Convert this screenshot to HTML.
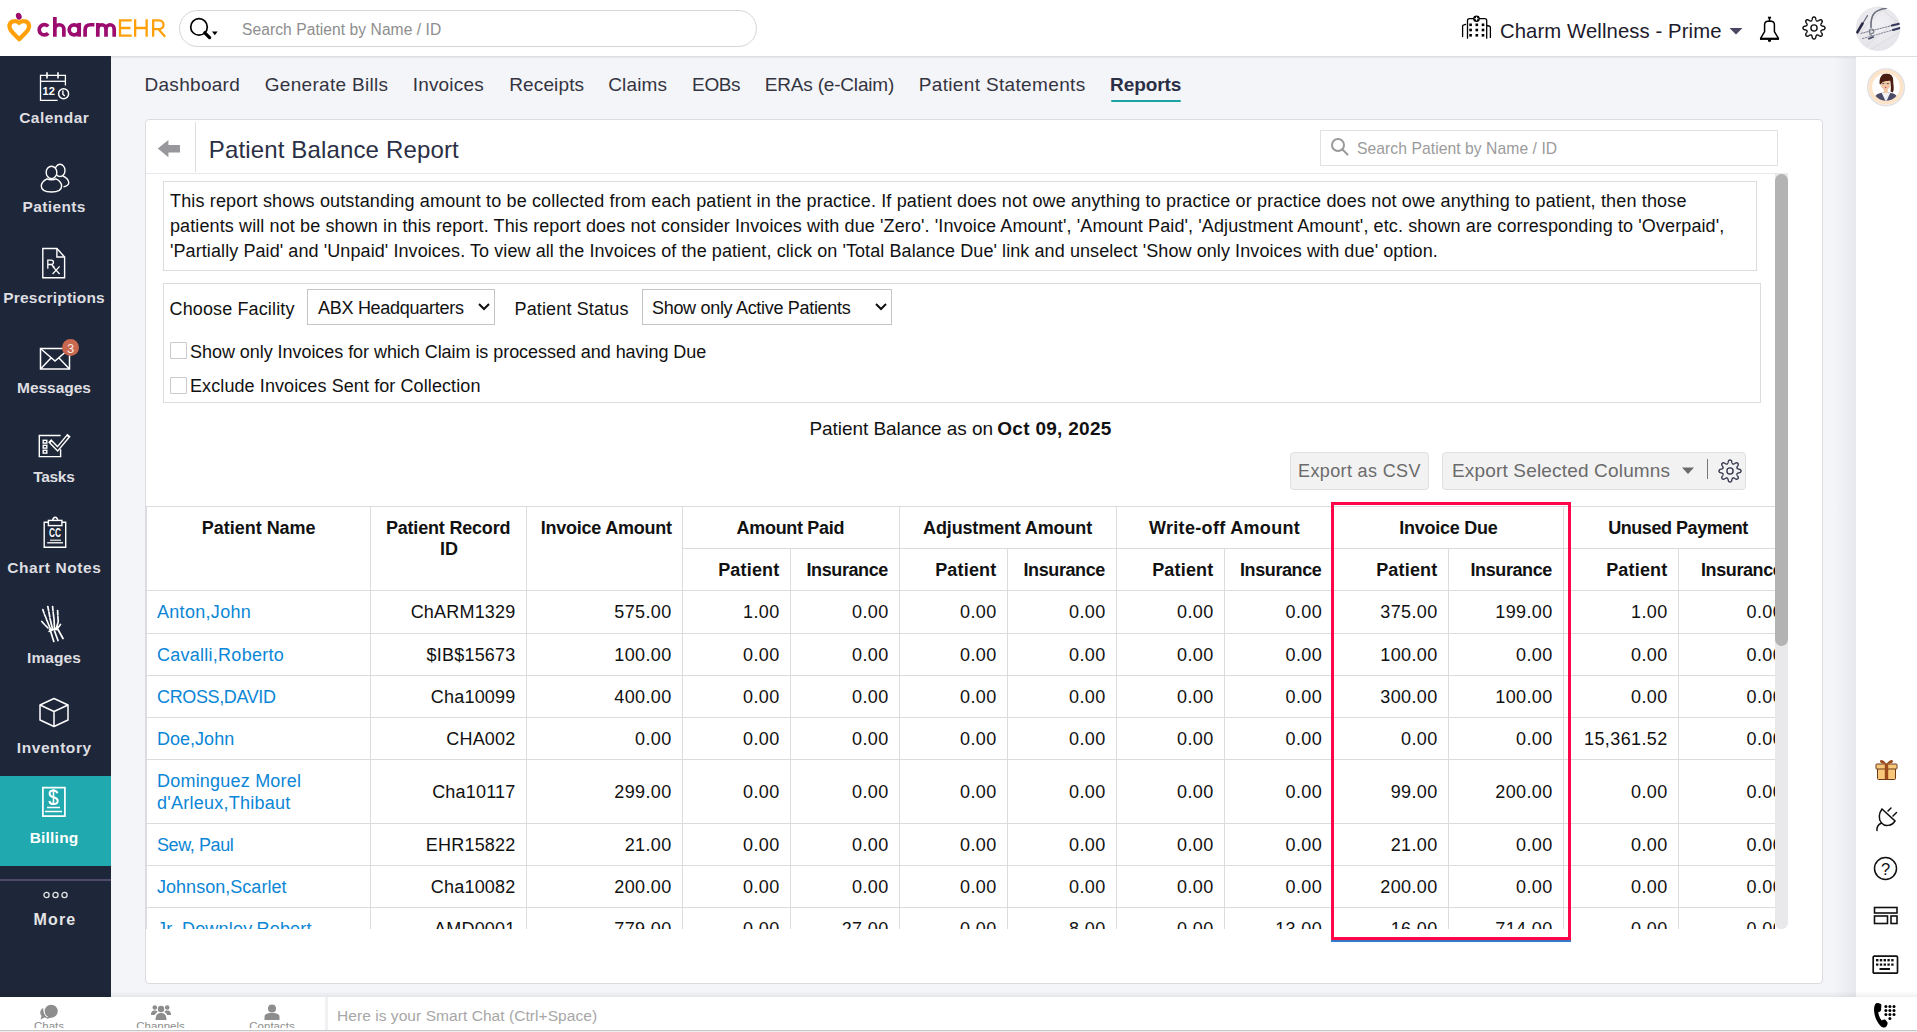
<!DOCTYPE html>
<html><head><meta charset="utf-8"><title>Patient Balance Report</title>
<style>
html,body{margin:0;padding:0;}
body{width:1917px;height:1032px;overflow:hidden;position:relative;background:#f4f5f9;font-family:"Liberation Sans",sans-serif;}
.r{position:absolute;}
.t{position:absolute;white-space:nowrap;}
</style></head><body>
<div class="r" style="left:0px;top:0px;width:1917px;height:56px;background:#fff;"></div>
<div class="r" style="left:0px;top:56px;width:1917px;height:1px;background:#dddde1;"></div>
<div class="r" style="left:0px;top:57px;width:1917px;height:2px;background:linear-gradient(#e4e5ea,#f3f4f8);"></div>
<svg class="r" style="left:0px;top:0px" width="170" height="50" viewBox="0 0 170 50">
<ellipse cx="18.8" cy="16.2" rx="2.8" ry="3.5" fill="#9c0b6e" transform="rotate(-20 18.8 16.2)"/>
<path d="M19.2 22.9 C17 20.6 14.5 20.8 12.5 21.5 C10 22.5 9.3 25 9.5 27 C9.8 29.5 11.5 31.5 13 33 L19.2 39.2 L25.4 33 C27 31.5 28.7 29.5 29 27 C29.2 25 28.5 22.5 26 21.5 C24 20.8 21.4 20.6 19.2 22.9 Z" fill="none" stroke="#ffa00a" stroke-width="4.2" stroke-linejoin="round"/>
<g fill="none" stroke="#9c0b6e" stroke-width="3.7">
<path d="M48.2 26.4 A5.15 5.15 0 1 0 48.2 33.2"/>
<path d="M54.85 16.9 V36.7 M63.85 36.7 V29.2 A4.5 4.45 0 0 0 54.85 29.2"/>
<circle cx="74.2" cy="29.8" r="5.0"/><path d="M79.2 22.9 V36.7"/>
<path d="M85.1 36.7 V30 C85.1 26.2 87.5 24.75 90.5 24.75 L94.4 24.75"/>
<path d="M97.8 22.9 V36.7 M97.8 29 A4.1 4.25 0 0 1 106 29 V36.7 M106 29 A4.1 4.25 0 0 1 114.2 29 V36.7"/>
</g>
<g fill="none" stroke="#ffa00a" stroke-width="2.3">
<path d="M131.7 20.35 H120 V35.55 H131.7 M120 28 H130.5"/>
<path d="M135.15 19.2 V36.7 M146.65 19.2 V36.7 M135.15 28 H146.65"/>
<path d="M153.15 36.7 V20.35 H159 C165 20.35 165 29.2 159 29.2 H153.15 M158.5 29.2 L165.2 36.7"/>
</g></svg>
<div class="r" style="left:179px;top:10px;width:578px;height:37px;background:#fff;border:1px solid #d6d6d9;border-radius:19px;box-sizing:border-box;"></div>
<svg class="r" style="left:188px;top:16px" width="34" height="26" viewBox="0 0 34 26">
<circle cx="11" cy="10.9" r="8.3" fill="none" stroke="#000" stroke-width="1.7"/>
<line x1="16.8" y1="16.8" x2="21.6" y2="21.6" stroke="#000" stroke-width="3.3" stroke-linecap="round"/>
<path d="M24 15.4 L29.6 15.4 L26.8 19.3 Z" fill="#000"/>
</svg>
<div class="t" style="top:20.14px;font-size:15.6px;line-height:19.5px;color:#8e8e8e;left:242px;letter-spacing:0.063px;"><span style="margin-right:-0.063px">Search Patient by Name / ID</span></div>
<svg class="r" style="left:1461px;top:14px" width="32" height="26" viewBox="0 0 32 26">
<g fill="none" stroke="#000" stroke-width="1.3" stroke-linecap="round">
<path d="M6.5 24.2 V6.6 Q6.5 4.7 8.4 4.7 H23.8 Q25.7 4.7 25.7 6.6 V24.2"/>
<path d="M1.6 22.6 V11.9 Q1.6 11 3 10.8 L4.6 10.3"/><path d="M25.7 11.5 L28 12 Q29.4 12.3 29.4 13.6 V23.4"/>
</g>
<circle cx="15.5" cy="4.7" r="3.3" fill="#000"/><path d="M15.5 2.8 V6.6 M13.6 4.7 H17.4" stroke="#fff" stroke-width="1.1"/>
<g fill="#000">
<rect x="8.3" y="9.5" width="2.6" height="2.6"/><rect x="14.5" y="9.5" width="2.6" height="2.6"/><rect x="20.7" y="9.5" width="2.6" height="2.6"/>
<rect x="8.3" y="14.7" width="2.6" height="2.6"/><rect x="14.5" y="14.7" width="2.6" height="2.6"/><rect x="20.7" y="14.7" width="2.6" height="2.6"/>
<rect x="8.3" y="20" width="2.6" height="2.6"/><rect x="14.5" y="20" width="2.6" height="2.6"/><rect x="20.7" y="20" width="2.6" height="2.6"/>
</g></svg>
<div class="t" style="top:18.57px;font-size:20.3px;line-height:25.38px;color:#1d1a2b;left:1500px;letter-spacing:0.097px;"><span style="margin-right:-0.097px">Charm Wellness - Prime</span></div>
<svg class="r" style="left:1729px;top:27px" width="14" height="8" viewBox="0 0 14 8"><path d="M0.5 1 H13.5 L7 7.5 Z" fill="#4b4661"/></svg>
<svg class="r" style="left:1758px;top:16px" width="24" height="28" viewBox="0 0 24 28">
<g fill="none" stroke="#000" stroke-width="1.5" stroke-linejoin="round">
<path d="M2.6 22.4 L6.6 15.6 V8.4 Q6.6 5 11.5 4.9 Q16.4 5 16.4 8.4 V15.6 L20.4 22.4 Z"/>
<path d="M11.5 1.8 V4.9"/><path d="M9.9 1.6 H13.1" stroke-width="1.8"/>
<path d="M2 22.9 H21" stroke-width="2"/>
</g>
<path d="M10 23.5 H13 V25.3 Q11.5 26.6 10 25.3 Z" fill="#000"/>
</svg>
<svg class="r" style="left:1801.5px;top:16.2px" width="24" height="24" viewBox="0 0 24 24"><path d="M12.00 0.95 L12.22 0.97 L12.43 1.02 L12.64 1.10 L12.85 1.22 L13.05 1.38 L13.23 1.57 L13.41 1.79 L13.58 2.05 L13.72 2.37 L13.81 2.88 L13.89 3.38 L13.99 3.70 L14.09 3.98 L14.20 4.21 L14.30 4.41 L14.41 4.59 L14.52 4.74 L14.63 4.86 L14.76 4.96 L14.89 5.02 L15.03 5.07 L15.19 5.09 L15.35 5.08 L15.54 5.06 L15.74 5.01 L15.95 4.94 L16.19 4.85 L16.46 4.73 L16.76 4.57 L17.17 4.27 L17.59 3.98 L17.92 3.85 L18.22 3.78 L18.50 3.75 L18.77 3.75 L19.02 3.78 L19.25 3.84 L19.46 3.93 L19.65 4.05 L19.81 4.19 L19.95 4.35 L20.07 4.54 L20.16 4.75 L20.22 4.98 L20.25 5.23 L20.25 5.50 L20.22 5.78 L20.15 6.08 L20.02 6.41 L19.73 6.83 L19.43 7.24 L19.27 7.54 L19.15 7.81 L19.06 8.05 L18.99 8.26 L18.94 8.46 L18.92 8.65 L18.91 8.81 L18.93 8.97 L18.98 9.11 L19.04 9.24 L19.14 9.37 L19.26 9.48 L19.41 9.59 L19.59 9.70 L19.79 9.80 L20.02 9.91 L20.30 10.01 L20.62 10.11 L21.12 10.19 L21.63 10.28 L21.95 10.42 L22.21 10.59 L22.43 10.77 L22.62 10.95 L22.78 11.15 L22.90 11.36 L22.98 11.57 L23.03 11.78 L23.05 12.00 L23.03 12.22 L22.98 12.43 L22.90 12.64 L22.78 12.85 L22.62 13.05 L22.43 13.23 L22.21 13.41 L21.95 13.58 L21.63 13.72 L21.12 13.81 L20.62 13.89 L20.30 13.99 L20.02 14.09 L19.79 14.20 L19.59 14.30 L19.41 14.41 L19.26 14.52 L19.14 14.63 L19.04 14.76 L18.98 14.89 L18.93 15.03 L18.91 15.19 L18.92 15.35 L18.94 15.54 L18.99 15.74 L19.06 15.95 L19.15 16.19 L19.27 16.46 L19.43 16.76 L19.73 17.17 L20.02 17.59 L20.15 17.92 L20.22 18.22 L20.25 18.50 L20.25 18.77 L20.22 19.02 L20.16 19.25 L20.07 19.46 L19.95 19.65 L19.81 19.81 L19.65 19.95 L19.46 20.07 L19.25 20.16 L19.02 20.22 L18.77 20.25 L18.50 20.25 L18.22 20.22 L17.92 20.15 L17.59 20.02 L17.17 19.73 L16.76 19.43 L16.46 19.27 L16.19 19.15 L15.95 19.06 L15.74 18.99 L15.54 18.94 L15.35 18.92 L15.19 18.91 L15.03 18.93 L14.89 18.98 L14.76 19.04 L14.63 19.14 L14.52 19.26 L14.41 19.41 L14.30 19.59 L14.20 19.79 L14.09 20.02 L13.99 20.30 L13.89 20.62 L13.81 21.12 L13.72 21.63 L13.58 21.95 L13.41 22.21 L13.23 22.43 L13.05 22.62 L12.85 22.78 L12.64 22.90 L12.43 22.98 L12.22 23.03 L12.00 23.05 L11.78 23.03 L11.57 22.98 L11.36 22.90 L11.15 22.78 L10.95 22.62 L10.77 22.43 L10.59 22.21 L10.42 21.95 L10.28 21.63 L10.19 21.12 L10.11 20.62 L10.01 20.30 L9.91 20.02 L9.80 19.79 L9.70 19.59 L9.59 19.41 L9.48 19.26 L9.37 19.14 L9.24 19.04 L9.11 18.98 L8.97 18.93 L8.81 18.91 L8.65 18.92 L8.46 18.94 L8.26 18.99 L8.05 19.06 L7.81 19.15 L7.54 19.27 L7.24 19.43 L6.83 19.73 L6.41 20.02 L6.08 20.15 L5.78 20.22 L5.50 20.25 L5.23 20.25 L4.98 20.22 L4.75 20.16 L4.54 20.07 L4.35 19.95 L4.19 19.81 L4.05 19.65 L3.93 19.46 L3.84 19.25 L3.78 19.02 L3.75 18.77 L3.75 18.50 L3.78 18.22 L3.85 17.92 L3.98 17.59 L4.27 17.17 L4.57 16.76 L4.73 16.46 L4.85 16.19 L4.94 15.95 L5.01 15.74 L5.06 15.54 L5.08 15.35 L5.09 15.19 L5.07 15.03 L5.02 14.89 L4.96 14.76 L4.86 14.63 L4.74 14.52 L4.59 14.41 L4.41 14.30 L4.21 14.20 L3.98 14.09 L3.70 13.99 L3.38 13.89 L2.88 13.81 L2.37 13.72 L2.05 13.58 L1.79 13.41 L1.57 13.23 L1.38 13.05 L1.22 12.85 L1.10 12.64 L1.02 12.43 L0.97 12.22 L0.95 12.00 L0.97 11.78 L1.02 11.57 L1.10 11.36 L1.22 11.15 L1.38 10.95 L1.57 10.77 L1.79 10.59 L2.05 10.42 L2.37 10.28 L2.88 10.19 L3.38 10.11 L3.70 10.01 L3.98 9.91 L4.21 9.80 L4.41 9.70 L4.59 9.59 L4.74 9.48 L4.86 9.37 L4.96 9.24 L5.02 9.11 L5.07 8.97 L5.09 8.81 L5.08 8.65 L5.06 8.46 L5.01 8.26 L4.94 8.05 L4.85 7.81 L4.73 7.54 L4.57 7.24 L4.27 6.83 L3.98 6.41 L3.85 6.08 L3.78 5.78 L3.75 5.50 L3.75 5.23 L3.78 4.98 L3.84 4.75 L3.93 4.54 L4.05 4.35 L4.19 4.19 L4.35 4.05 L4.54 3.93 L4.75 3.84 L4.98 3.78 L5.23 3.75 L5.50 3.75 L5.78 3.78 L6.08 3.85 L6.41 3.98 L6.83 4.27 L7.24 4.57 L7.54 4.73 L7.81 4.85 L8.05 4.94 L8.26 5.01 L8.46 5.06 L8.65 5.08 L8.81 5.09 L8.97 5.07 L9.11 5.02 L9.24 4.96 L9.37 4.86 L9.48 4.74 L9.59 4.59 L9.70 4.41 L9.80 4.21 L9.91 3.98 L10.01 3.70 L10.11 3.38 L10.19 2.88 L10.28 2.37 L10.42 2.05 L10.59 1.79 L10.77 1.57 L10.95 1.38 L11.15 1.22 L11.36 1.10 L11.57 1.02 L11.78 0.97 Z" fill="none" stroke="#111" stroke-width="1.4" stroke-linejoin="round"/><circle cx="12" cy="12" r="3.1" fill="none" stroke="#111" stroke-width="1.4"/></svg>
<svg class="r" style="left:1856px;top:6px" width="45" height="45" viewBox="0 0 45 45">
<defs><clipPath id="avc"><circle cx="22" cy="22.7" r="22.2"/></clipPath>
<radialGradient id="avg" cx="50%" cy="40%" r="60%"><stop offset="0" stop-color="#f2f2f5"/><stop offset="1" stop-color="#e4e4e9"/></radialGradient></defs>
<circle cx="22" cy="22.7" r="22.2" fill="url(#avg)"/>
<g clip-path="url(#avc)" fill="none" stroke-linecap="round">
<path d="M22 0 L44 18 M10 40 L44 12 M14 44 L44 26 M0 30 L30 0" stroke="#ddd6da" stroke-width="0.8"/>
<path d="M11.5 9.6 L6 18.5" stroke="#6a6d80" stroke-width="1.2"/>
<path d="M6.5 17.5 L1.3 26.4" stroke="#2a2d45" stroke-width="2.6"/>
<path d="M15 21.5 C14.5 10 17 4 30.6 2.3" stroke="#6b6e7e" stroke-width="1.6"/>
<path d="M5 27.4 L36 19.5" stroke="#7a7d8c" stroke-width="1" stroke-dasharray="1.5 1.3"/>
<path d="M6.5 32.6 L37 24" stroke="#85889a" stroke-width="1" stroke-dasharray="1.5 1.3"/>
<path d="M36 19.5 L44 17.5 M37 24 L44 22" stroke="#34375a" stroke-width="2.2"/>
<circle cx="15.5" cy="25.3" r="2.3" stroke="#7d808e" stroke-width="1.2"/>
<path d="M14 28 L16.5 31 L13.5 32.5" stroke="#9a9ca6" stroke-width="2"/>
<path d="M12.5 32.8 L17.5 31" stroke="#4a4d6a" stroke-width="1.4"/>
</g></svg>
<div class="r" style="left:0px;top:56px;width:111px;height:941px;background:#1e2739;"></div>
<div class="r" style="left:0px;top:776px;width:111px;height:90px;background:#20a9ae;"></div>
<div class="r" style="left:0px;top:879px;width:111px;height:1.5px;background:#4d4b69;"></div>
<svg class="r" style="left:39px;top:71px" width="32" height="32" viewBox="0 0 32 32"><g fill="none" stroke="#fff" stroke-width="1.3">
<path d="M26.4 14.5 V4.3 H1.5 V29.3 H18.6"/><path d="M1.5 10.3 H26.4"/><path d="M8 1.2 V7.4 M19 1.2 V7.4" stroke-width="1.6"/>
<circle cx="24.6" cy="22.8" r="5" stroke-width="1.5" fill="#1e2739"/><path d="M23.9 19.6 V23.2 L25.8 25.1" stroke-width="1.4"/></g>
<text x="3.6" y="23.9" font-family="Liberation Sans" font-weight="bold" font-size="11" fill="#fff">12</text></svg>
<div class="t" style="top:108.24px;font-size:15.5px;line-height:19.38px;color:#dedee1;font-weight:bold;left:-446px;width:1000px;text-align:center;letter-spacing:0.458px;"><span style="margin-right:-0.458px">Calendar</span></div>
<svg class="r" style="left:39px;top:163px" width="32" height="32" viewBox="0 0 32 32"><g fill="none" stroke="#fff" stroke-width="1.4">
<ellipse cx="21" cy="7.4" rx="5" ry="6.1"/><path d="M23.7 13 C27 14 29.8 17 29.8 19.8 C29.8 22 27 23.6 24.5 23.7"/>
<ellipse cx="12.5" cy="9.4" rx="5.3" ry="6.2" fill="#1e2739"/><path d="M8 15.8 C4.5 17.5 2.3 20 2.3 23 C2.3 27 6.5 29 12.5 29 C18.5 29 22.6 27 22.6 23 C22.6 20 20.5 17.5 17 15.8 C15 17 10 17 8 15.8 Z" fill="#1e2739"/></g></svg>
<div class="t" style="top:197.24px;font-size:15.5px;line-height:19.38px;color:#dedee1;font-weight:bold;left:-446px;width:1000px;text-align:center;letter-spacing:0.377px;"><span style="margin-right:-0.377px">Patients</span></div>
<svg class="r" style="left:41px;top:247px" width="26" height="33" viewBox="0 0 26 33"><g fill="none" stroke="#fff" stroke-width="1.4">
<path d="M1.8 1.5 H15.9 L23.6 10 V30.8 H1.8 Z"/><path d="M15.9 1.5 V10 H23.6"/>
<path d="M6.8 21.8 V13.2 H10.3 C13.2 13.2 13.2 17.5 10.3 17.5 H6.8 M10.5 17.5 L13.5 20.5" stroke-width="1.3"/>
<path d="M11.6 19.4 L18.6 27 M18.6 19.4 L11.6 27" stroke-width="1.3"/></g></svg>
<div class="t" style="top:288.24px;font-size:15.5px;line-height:19.38px;color:#dedee1;font-weight:bold;left:-446px;width:1000px;text-align:center;letter-spacing:0.199px;"><span style="margin-right:-0.199px">Prescriptions</span></div>
<svg class="r" style="left:39px;top:346px" width="34" height="26" viewBox="0 0 34 26"><g fill="none" stroke="#fff" stroke-width="1.5">
<rect x="1.5" y="2.5" width="29" height="20.5"/><path d="M1.5 2.5 L16 15 L30.5 2.5 M1.5 23 L12 12 M30.5 23 L20 12"/></g></svg>
<div class="t" style="top:378.24px;font-size:15.5px;line-height:19.38px;color:#dedee1;font-weight:bold;left:-446px;width:1000px;text-align:center;letter-spacing:-0.023px;"><span style="margin-right:0.023px">Messages</span></div>
<svg class="r" style="left:38px;top:432px" width="33" height="27" viewBox="0 0 33 27"><g fill="none" stroke="#fff" stroke-width="1.4">
<path d="M22.6 3.5 H1.3 V24.6 H22.6 V17.2"/><rect x="5.2" y="8.3" width="3.6" height="2.8"/><rect x="5.2" y="13.3" width="3.6" height="2.8"/><rect x="5.2" y="18.3" width="3.6" height="2.8"/>
<path d="M13.2 10.2 L19.6 16.8 L29.6 4.8" stroke-width="4.4" stroke-linecap="square"/><path d="M13.2 10.2 L19.6 16.8 L29.6 4.8" stroke="#1e2739" stroke-width="1.6"/></g></svg>
<div class="t" style="top:467.24px;font-size:15.5px;line-height:19.38px;color:#dedee1;font-weight:bold;left:-446px;width:1000px;text-align:center;letter-spacing:-0.291px;"><span style="margin-right:0.291px">Tasks</span></div>
<svg class="r" style="left:42px;top:515px" width="26" height="34" viewBox="0 0 26 34"><g fill="none" stroke="#fff" stroke-width="1.4">
<path d="M6.2 7.2 H2.2 V32.2 H23.7 V7.2 H20.1"/><rect x="6.4" y="5.4" width="13.5" height="5.2"/><path d="M10.6 5.4 C11 3.2 12 2.3 13.2 2.3 C14.4 2.3 15.4 3.2 15.8 5.4"/>
<path d="M8 25.3 H19" stroke="#c4c4c4" stroke-width="1.6"/><path d="M5.2 27.8 H21" stroke-width="1.3"/></g>
<text x="7" y="22" font-family="Liberation Sans" font-weight="bold" font-size="12.4" fill="#fff" textLength="12" lengthAdjust="spacingAndGlyphs">CC</text></svg>
<div class="t" style="top:558.24px;font-size:15.5px;line-height:19.38px;color:#dedee1;font-weight:bold;left:-446px;width:1000px;text-align:center;letter-spacing:0.589px;"><span style="margin-right:-0.589px">Chart Notes</span></div>
<svg class="r" style="left:34px;top:600px" width="40" height="46" viewBox="0 0 40 46"><g fill="none" stroke="#fff" stroke-width="1.7" stroke-linecap="round">
<path d="M8.8 9.5 L10 13 M10.5 14.5 L12.3 18.5 M13.8 6.5 L14.6 10.5 M14.9 12 L15.8 17 M18.6 6.5 L19 11 M19.2 12.5 L19.8 17.5 M23.6 10.5 L23.8 15 M23.9 16.5 L24.2 21.5"/>
<path d="M7.8 21.5 L10.5 24.5 M11.5 25.5 L14 28"/>
<path d="M12.5 19.5 L16.5 29 M16 18.5 L18.5 29 M20 18.5 L20.5 29 M24 22.5 L22 29.5 M26.5 24.5 L23 29"/>
<path d="M15.5 29.5 L23.5 29.5 M15 31.5 L24 27.5" stroke-width="1.4"/>
<path d="M16.5 31 L19.8 41.5 M20.5 31 L24 40.5 M24 29.5 L29 38.5"/>
</g></svg>
<div class="t" style="top:648.24px;font-size:15.5px;line-height:19.38px;color:#dedee1;font-weight:bold;left:-446px;width:1000px;text-align:center;letter-spacing:0.086px;"><span style="margin-right:-0.086px">Images</span></div>
<svg class="r" style="left:38px;top:697px" width="32" height="31" viewBox="0 0 32 31"><g fill="none" stroke="#fff" stroke-width="1.5" stroke-linejoin="round">
<path d="M16 1.5 L30 8 V23 L16 29.5 L2 23 V8 Z"/><path d="M2 8 L16 14.5 L30 8 M16 14.5 V29.5"/></g></svg>
<div class="t" style="top:738.24px;font-size:15.5px;line-height:19.38px;color:#dedee1;font-weight:bold;left:-446px;width:1000px;text-align:center;letter-spacing:0.561px;"><span style="margin-right:-0.561px">Inventory</span></div>
<svg class="r" style="left:41px;top:786px" width="26" height="32" viewBox="0 0 26 32"><g fill="none" stroke="#fff">
<path d="M1.9 1.7 H23.9 V30.2 H1.9 Z" stroke-width="1.7"/>
<path d="M16.4 7.3 C16 5.3 14.5 4.6 12.5 4.6 C10 4.6 8.6 5.9 8.6 7.8 C8.6 10 10.6 10.8 12.6 11.3 C14.8 11.9 16.7 12.6 16.7 15 C16.7 17 15 18.1 12.5 18.1 C10.2 18.1 8.7 17.1 8.3 15" stroke-width="2"/>
<path d="M12.5 3.2 V18.8" stroke-width="1.6"/>
<path d="M6 21.5 H19 M4 25.5 H21" stroke-width="1.3"/></g></svg>
<div class="t" style="top:828.24px;font-size:15.5px;line-height:19.38px;color:#fff;font-weight:bold;left:-446px;width:1000px;text-align:center;letter-spacing:0.198px;"><span style="margin-right:-0.198px">Billing</span></div>
<div class="r" style="left:62px;top:339px;width:17px;height:17px;border-radius:50%;background:#c9674f;color:#f4ece6;font-size:13px;line-height:19px;text-align:center;">3</div>
<svg class="r" style="left:42px;top:890px" width="27" height="10" viewBox="0 0 27 10"><g fill="none" stroke="#e4e4e6" stroke-width="1.3">
<circle cx="4.5" cy="5" r="2.6"/><circle cx="13.5" cy="5" r="2.6"/><circle cx="22.5" cy="5" r="2.6"/></g></svg>
<div class="t" style="top:909.75px;font-size:16px;line-height:20.0px;color:#e4e4e6;font-weight:bold;left:-445.7px;width:1000px;text-align:center;letter-spacing:1.189px;"><span style="margin-right:-1.189px">More</span></div>
<div class="r" style="left:1834px;top:57px;width:22px;height:940px;background:linear-gradient(90deg,rgba(0,0,30,0),rgba(0,0,30,0.05));"></div>
<div class="r" style="left:1856px;top:57px;width:61px;height:940px;background:#fff;"></div>
<svg class="r" style="left:1865.5px;top:67px" width="40" height="40" viewBox="0 0 40 40">
<defs><clipPath id="wc"><circle cx="20" cy="20" r="13.8"/></clipPath></defs>
<circle cx="20" cy="20.3" r="18.3" fill="none" stroke="rgba(60,60,80,0.16)" stroke-width="1.6"/>
<circle cx="20" cy="20" r="17.6" fill="#fde4c9"/>
<circle cx="20" cy="20" r="13.8" fill="#fff"/>
<g clip-path="url(#wc)">
<path d="M7.5 37 C7.5 28 11 25.5 20 25.5 C29 25.5 32.5 28 32.5 37 Z" fill="#4b4b68"/>
<path d="M15.5 25.5 L20 35 L24.5 25.5 Z" fill="#f1f1f4"/>
<rect x="17.8" y="20" width="4" height="6" fill="#f1c7a3"/>
<ellipse cx="19.6" cy="16.8" rx="5" ry="5.9" fill="#f1c7a3"/>
<path d="M13.6 17 C13 9.5 16.5 6.5 20.5 6.5 C25 6.5 27.3 9.5 27.2 13.5 C27 17.5 28.8 21.5 26.8 25.5 L24.6 24.5 C25.2 20.5 24.8 16.5 24.2 13.8 C21 14.2 16.5 13.5 14.6 17.5 Z" fill="#4a1d12"/>
<path d="M16.3 16.6 H18.3 M20.8 16.6 H22.8" stroke="#3a3f5a" stroke-width="0.9"/>
<circle cx="19.6" cy="20.6" r="0.75" fill="#e0407a"/>
</g></svg>
<svg class="r" style="left:1875px;top:758px" width="23" height="23" viewBox="0 0 23 23">
<rect x="2.5" y="10" width="18" height="11.5" rx="1" fill="#f8c77a" stroke="#6b3a1a" stroke-width="1"/>
<rect x="1" y="6" width="21" height="5" rx="0.8" fill="#f8c77a" stroke="#6b3a1a" stroke-width="1"/>
<rect x="9.8" y="6" width="3.4" height="15.5" fill="#9b4a1c"/>
<path d="M11.5 6 C9 2 5.5 1 5 3 C4.6 4.8 8 6 11.5 6 C15 6 18.4 4.8 18 3 C17.5 1 14 2 11.5 6 Z" fill="#9b4a1c"/>
</svg>
<svg class="r" style="left:1874px;top:805px" width="26" height="27" viewBox="0 0 26 27"><g fill="none" stroke="#111" stroke-width="1.5" stroke-linecap="round">
<path d="M8 4 L21 16 C18 21 11 22 7.5 18 C4 14 5 8 8 4 Z"/><path d="M14 6 L17 3 M19 11 L22.5 7.5"/>
<path d="M7.5 18 C4.5 19.5 2.5 22 3 25.5"/></g></svg>
<svg class="r" style="left:1873px;top:856px" width="25" height="25" viewBox="0 0 25 25">
<circle cx="12.5" cy="12.5" r="11" fill="none" stroke="#111" stroke-width="1.5"/>
<text x="12.5" y="18.6" font-family="Liberation Sans" font-size="16.5" text-anchor="middle" fill="#111">?</text></svg>
<svg class="r" style="left:1873px;top:906px" width="26" height="19" viewBox="0 0 26 19"><g fill="none" stroke="#111" stroke-width="1.6">
<rect x="1.5" y="1.5" width="22.5" height="5.5"/><rect x="1.5" y="10" width="13" height="7.5"/><rect x="18" y="10" width="6" height="7.5"/></g></svg>
<svg class="r" style="left:1872px;top:955px" width="27" height="20" viewBox="0 0 27 20">
<rect x="1.2" y="1.2" width="24.3" height="17" rx="1" fill="none" stroke="#111" stroke-width="1.7"/>
<g fill="#111"><rect x="4" y="4" width="2.4" height="2.4"/><rect x="7.8" y="4" width="2.4" height="2.4"/><rect x="11.6" y="4" width="2.4" height="2.4"/><rect x="15.4" y="4" width="2.4" height="2.4"/><rect x="19.2" y="4" width="2.4" height="2.4"/>
<rect x="4" y="8.5" width="2.4" height="2.2"/><rect x="7.8" y="8.5" width="2.4" height="2.2"/><rect x="11.6" y="8.5" width="2.4" height="2.2"/><rect x="15.4" y="8.5" width="2.4" height="2.2"/><rect x="19.2" y="8.5" width="2.4" height="2.2"/>
<rect x="7.5" y="13" width="10.5" height="2"/></g></svg>
<div class="r" style="left:0px;top:991px;width:1917px;height:6px;background:linear-gradient(rgba(0,0,0,0),rgba(0,0,0,0.06));"></div>
<div class="r" style="left:0px;top:997px;width:1917px;height:35px;background:#fff;"></div>
<div class="r" style="left:0px;top:1030px;width:1917px;height:1px;background:#c7c7c9;"></div>
<div class="r" style="left:0px;top:1031px;width:1917px;height:1px;background:#ededef;"></div>
<div class="r" style="left:324.5px;top:997px;width:3px;height:33px;background:#f1f1f4;"></div>
<svg class="r" style="left:38px;top:1003px" width="22" height="18" viewBox="0 0 22 18"><g fill="#8d8d8d">
<circle cx="13.2" cy="8.2" r="6.5"/><path d="M10.5 13 L8.5 16.2 L14 14 Z"/>
<path d="M5.3 5 C2 6.5 1.3 10.5 3.5 13 L2.5 16.5 L6.5 14.5 C8 15 9.5 15 10.5 14.6 C7 13.5 5 10 5.3 5 Z"/></g></svg>
<svg class="r" style="left:151px;top:1004px" width="20" height="16" viewBox="0 0 20 16"><g fill="#8d8d8d">
<circle cx="10" cy="5" r="3.2"/><path d="M4.5 16 C4.5 10.5 7 9 10 9 C13 9 15.5 10.5 15.5 16 Z"/>
<circle cx="3.8" cy="3.5" r="2.3"/><path d="M0 11 C0 7.5 1.5 6.5 3.8 6.5 C5.5 6.5 6.5 7 6.5 8 C5 9 4 10 3.8 11 Z"/>
<circle cx="16.2" cy="3.5" r="2.3"/><path d="M20 11 C20 7.5 18.5 6.5 16.2 6.5 C14.5 6.5 13.5 7 13.5 8 C15 9 16 10 16.2 11 Z"/></g></svg>
<svg class="r" style="left:264px;top:1004px" width="16" height="16" viewBox="0 0 16 16"><g fill="#8d8d8d">
<circle cx="8" cy="4.5" r="4"/><path d="M0.5 16 V13 C0.5 10 3 9 8 9 C13 9 15.5 10 15.5 13 V16 Z"/></g></svg>
<div class="r" style="left:0;top:1021px;width:330px;height:7px;overflow:hidden"><div class="t" style="left:49px;top:-1.4px;font-size:11.5px;line-height:13px;color:#8d8d8d;transform:translateX(-50%)">Chats</div><div class="t" style="left:160.5px;top:-1.4px;font-size:11.5px;line-height:13px;color:#8d8d8d;transform:translateX(-50%)">Channels</div><div class="t" style="left:272px;top:-1.4px;font-size:11.5px;line-height:13px;color:#8d8d8d;transform:translateX(-50%)">Contacts</div></div>
<div class="t" style="top:1006.24px;font-size:15.5px;line-height:19.38px;color:#a7a7a7;left:337px;letter-spacing:0.059px;"><span style="margin-right:-0.059px">Here is your Smart Chat (Ctrl+Space)</span></div>
<svg class="r" style="left:1872px;top:1002px" width="26" height="28" viewBox="0 0 26 28"><g fill="#000">
<path d="M4.2 1.2 C6.2 0.6 8.6 1.4 9.4 2.8 L9.1 8.2 C8.8 9.4 7.4 9.9 6.2 10.3 C6.6 13.2 7.8 16.2 9.8 18.6 C11 17.6 12.6 17.2 13.6 18 L15.4 20.2 C16 21.8 15.2 24.3 13.4 25.2 C11.6 26 10 25.3 8.6 24 C4.8 20 2.6 15 2.1 9.2 C1.9 6 2.2 2.6 4.2 1.2 Z"/>
<circle cx="13.9" cy="4.5" r="1.5"/><circle cx="17.9" cy="4.5" r="1.5"/><circle cx="22" cy="4.5" r="1.5"/>
<circle cx="13.9" cy="8.5" r="1.5"/><circle cx="17.9" cy="8.5" r="1.5"/><circle cx="22" cy="8.5" r="1.5"/>
<circle cx="13.9" cy="12.5" r="1.5"/><circle cx="17.9" cy="12.5" r="1.5"/><circle cx="22" cy="12.5" r="1.5"/>
<circle cx="17.9" cy="16.5" r="1.5"/></g></svg>
<div class="t" style="top:72.84px;font-size:19px;line-height:23.75px;color:#33343f;left:144.5px;letter-spacing:0.293px;"><span style="margin-right:-0.293px">Dashboard</span></div>
<div class="t" style="top:72.84px;font-size:19px;line-height:23.75px;color:#33343f;left:264.8px;letter-spacing:0.297px;"><span style="margin-right:-0.297px">Generate Bills</span></div>
<div class="t" style="top:72.84px;font-size:19px;line-height:23.75px;color:#33343f;left:412.7px;letter-spacing:0.185px;"><span style="margin-right:-0.185px">Invoices</span></div>
<div class="t" style="top:72.84px;font-size:19px;line-height:23.75px;color:#33343f;left:509.2px;letter-spacing:0.140px;"><span style="margin-right:-0.140px">Receipts</span></div>
<div class="t" style="top:72.84px;font-size:19px;line-height:23.75px;color:#33343f;left:608.1999999999999px;letter-spacing:0.167px;"><span style="margin-right:-0.167px">Claims</span></div>
<div class="t" style="top:72.84px;font-size:19px;line-height:23.75px;color:#33343f;left:692.0999999999999px;letter-spacing:-0.375px;"><span style="margin-right:0.375px">EOBs</span></div>
<div class="t" style="top:72.84px;font-size:19px;line-height:23.75px;color:#33343f;left:764.6999999999999px;letter-spacing:-0.181px;"><span style="margin-right:0.181px">ERAs (e-Claim)</span></div>
<div class="t" style="top:72.84px;font-size:19px;line-height:23.75px;color:#33343f;left:918.6999999999999px;letter-spacing:0.350px;"><span style="margin-right:-0.350px">Patient Statements</span></div>
<div class="t" style="top:72.84px;font-size:19px;line-height:23.75px;color:#2b2f45;font-weight:bold;left:1110px;letter-spacing:-0.066px;"><span style="margin-right:0.066px">Reports</span></div>
<div class="r" style="left:1111px;top:99.5px;width:70px;height:2.5px;background:#1aa3a3;border-radius:1px;"></div>
<div class="r" style="left:145px;top:119px;width:1678px;height:865px;background:#fff;border:1px solid #dcdcdf;border-radius:4px;box-sizing:border-box;"></div>
<div class="r" style="left:146px;top:173px;width:1642px;height:1px;background:#e8e8ec;"></div>
<div class="r" style="left:195px;top:122px;width:1px;height:50px;background:#dedede;"></div>
<svg class="r" style="left:157px;top:139px" width="25" height="20" viewBox="0 0 25 20">
<path d="M0.8 9.6 L11.4 1 V6 H23 V13.5 H11.4 V18.2 Z" fill="#98989c"/></svg>
<div class="t" style="top:134.98px;font-size:24px;line-height:30.0px;color:#2a2f45;left:208.8px;letter-spacing:0.146px;"><span style="margin-right:-0.146px">Patient Balance Report</span></div>
<div class="r" style="left:1320px;top:130px;width:458px;height:36px;border:1px solid #e2e2e6;box-sizing:border-box;background:#fff;"></div>
<svg class="r" style="left:1330px;top:137px" width="20" height="20" viewBox="0 0 20 20"><g fill="none" stroke="#9a9a9a" stroke-width="2">
<circle cx="8" cy="8" r="6"/><path d="M12.5 12.5 L17.5 17.5" stroke-linecap="round"/></g></svg>
<div class="t" style="top:139.05px;font-size:15.7px;line-height:19.62px;color:#9b9b9b;left:1357px;letter-spacing:0.052px;"><span style="margin-right:-0.052px">Search Patient by Name / ID</span></div>
<div class="r" style="left:1775px;top:174px;width:13px;height:755px;background:#e9e9ec;border-radius:0 0 6px 6px;"></div>
<div class="r" style="left:1775px;top:174px;width:13px;height:471.5px;background:#b3b3b3;border-radius:6.5px;"></div>
<div class="r" style="left:163px;top:181px;width:1594px;height:90px;border:1px solid #dcdcdf;box-sizing:border-box;"></div>
<div class="t" style="top:189.81px;font-size:18px;line-height:22.5px;color:#111;left:170px;letter-spacing:0.157px;"><span style="margin-right:-0.157px">This report shows outstanding amount to be collected from each patient in the practice. If patient does not owe anything to practice or practice does not owe anything to patient, then those</span></div>
<div class="t" style="top:214.81px;font-size:18px;line-height:22.5px;color:#111;left:170px;letter-spacing:0.110px;"><span style="margin-right:-0.110px">patients will not be shown in this report. This report does not consider Invoices with due &#x27;Zero&#x27;. &#x27;Invoice Amount&#x27;, &#x27;Amount Paid&#x27;, &#x27;Adjustment Amount&#x27;, etc. shown are corresponding to &#x27;Overpaid&#x27;,</span></div>
<div class="t" style="top:239.81px;font-size:18px;line-height:22.5px;color:#111;left:170px;letter-spacing:0.085px;"><span style="margin-right:-0.085px">&#x27;Partially Paid&#x27; and &#x27;Unpaid&#x27; Invoices. To view all the Invoices of the patient, click on &#x27;Total Balance Due&#x27; link and unselect &#x27;Show only Invoices with due&#x27; option.</span></div>
<div class="r" style="left:163px;top:283px;width:1598px;height:120px;border:1px solid #dcdcdf;box-sizing:border-box;"></div>
<div class="t" style="top:297.81px;font-size:18px;line-height:22.5px;color:#111;left:169.5px;letter-spacing:0.132px;"><span style="margin-right:-0.132px">Choose Facility</span></div>
<div class="r" style="left:307px;top:289px;width:188px;height:36px;border:1px solid #c4c4c6;box-sizing:border-box;"></div>
<div class="t" style="top:296.81px;font-size:18px;line-height:22.5px;color:#111;left:318px;letter-spacing:-0.280px;"><span style="margin-right:0.280px">ABX Headquarters</span></div>
<svg class="r" style="left:477px;top:302px" width="14" height="10" viewBox="0 0 14 10"><path d="M2 2 L7 7 L12 2" fill="none" stroke="#111" stroke-width="2"/></svg>
<div class="t" style="top:297.81px;font-size:18px;line-height:22.5px;color:#111;left:514.5px;letter-spacing:0.140px;"><span style="margin-right:-0.140px">Patient Status</span></div>
<div class="r" style="left:642px;top:289px;width:250px;height:36px;border:1px solid #c4c4c6;box-sizing:border-box;"></div>
<div class="t" style="top:296.81px;font-size:18px;line-height:22.5px;color:#111;left:652px;letter-spacing:-0.309px;"><span style="margin-right:0.309px">Show only Active Patients</span></div>
<svg class="r" style="left:874px;top:302px" width="14" height="10" viewBox="0 0 14 10"><path d="M2 2 L7 7 L12 2" fill="none" stroke="#111" stroke-width="2"/></svg>
<div class="r" style="left:170px;top:342px;width:17px;height:17px;border:1px solid #cacacc;box-sizing:border-box;border-radius:1px;background:#fff;"></div>
<div class="t" style="top:340.81px;font-size:18px;line-height:22.5px;color:#111;left:190px;letter-spacing:-0.049px;"><span style="margin-right:0.049px">Show only Invoices for which Claim is processed and having Due</span></div>
<div class="r" style="left:170px;top:377px;width:17px;height:17px;border:1px solid #cacacc;box-sizing:border-box;border-radius:1px;background:#fff;"></div>
<div class="t" style="top:374.81px;font-size:18px;line-height:22.5px;color:#111;left:190px;letter-spacing:0.093px;"><span style="margin-right:-0.093px">Exclude Invoices Sent for Collection</span></div>
<div class="t" style="top:416.84px;font-size:19px;line-height:23.75px;color:#111;left:809.5px;letter-spacing:-0.068px;"><span style="margin-right:0.068px">Patient Balance as on</span></div>
<div class="t" style="top:416.84px;font-size:19px;line-height:23.75px;color:#111;font-weight:bold;left:997.3px;letter-spacing:0.289px;"><span style="margin-right:-0.289px">Oct 09, 2025</span></div>
<div class="r" style="left:1290px;top:452px;width:139px;height:37.5px;background:#f2f2f3;border:1px solid #e0e0e3;box-sizing:border-box;border-radius:4px;"></div>
<div class="t" style="top:459.81px;font-size:18px;line-height:22.5px;color:#6b6b6b;left:1298px;letter-spacing:0.371px;"><span style="margin-right:-0.371px">Export as CSV</span></div>
<div class="r" style="left:1442px;top:452px;width:304px;height:37.5px;background:#f2f2f3;border:1px solid #e0e0e3;box-sizing:border-box;border-radius:4px;"></div>
<div class="t" style="top:458.84px;font-size:19px;line-height:23.75px;color:#6b6b6b;left:1452px;letter-spacing:0.169px;"><span style="margin-right:-0.169px">Export Selected Columns</span></div>
<svg class="r" style="left:1681px;top:466px" width="14" height="10" viewBox="0 0 14 10"><path d="M1 1.5 H13 L7 8 Z" fill="#6b6b6b"/></svg>
<div class="r" style="left:1707px;top:459px;width:1.2px;height:20px;background:#777;"></div>
<svg class="r" style="left:1717.5px;top:459.3px" width="24" height="24" viewBox="0 0 24 24"><path d="M12.00 0.95 L12.22 0.97 L12.43 1.02 L12.64 1.10 L12.85 1.22 L13.05 1.38 L13.23 1.57 L13.41 1.79 L13.58 2.05 L13.72 2.37 L13.81 2.88 L13.89 3.38 L13.99 3.70 L14.09 3.98 L14.20 4.21 L14.30 4.41 L14.41 4.59 L14.52 4.74 L14.63 4.86 L14.76 4.96 L14.89 5.02 L15.03 5.07 L15.19 5.09 L15.35 5.08 L15.54 5.06 L15.74 5.01 L15.95 4.94 L16.19 4.85 L16.46 4.73 L16.76 4.57 L17.17 4.27 L17.59 3.98 L17.92 3.85 L18.22 3.78 L18.50 3.75 L18.77 3.75 L19.02 3.78 L19.25 3.84 L19.46 3.93 L19.65 4.05 L19.81 4.19 L19.95 4.35 L20.07 4.54 L20.16 4.75 L20.22 4.98 L20.25 5.23 L20.25 5.50 L20.22 5.78 L20.15 6.08 L20.02 6.41 L19.73 6.83 L19.43 7.24 L19.27 7.54 L19.15 7.81 L19.06 8.05 L18.99 8.26 L18.94 8.46 L18.92 8.65 L18.91 8.81 L18.93 8.97 L18.98 9.11 L19.04 9.24 L19.14 9.37 L19.26 9.48 L19.41 9.59 L19.59 9.70 L19.79 9.80 L20.02 9.91 L20.30 10.01 L20.62 10.11 L21.12 10.19 L21.63 10.28 L21.95 10.42 L22.21 10.59 L22.43 10.77 L22.62 10.95 L22.78 11.15 L22.90 11.36 L22.98 11.57 L23.03 11.78 L23.05 12.00 L23.03 12.22 L22.98 12.43 L22.90 12.64 L22.78 12.85 L22.62 13.05 L22.43 13.23 L22.21 13.41 L21.95 13.58 L21.63 13.72 L21.12 13.81 L20.62 13.89 L20.30 13.99 L20.02 14.09 L19.79 14.20 L19.59 14.30 L19.41 14.41 L19.26 14.52 L19.14 14.63 L19.04 14.76 L18.98 14.89 L18.93 15.03 L18.91 15.19 L18.92 15.35 L18.94 15.54 L18.99 15.74 L19.06 15.95 L19.15 16.19 L19.27 16.46 L19.43 16.76 L19.73 17.17 L20.02 17.59 L20.15 17.92 L20.22 18.22 L20.25 18.50 L20.25 18.77 L20.22 19.02 L20.16 19.25 L20.07 19.46 L19.95 19.65 L19.81 19.81 L19.65 19.95 L19.46 20.07 L19.25 20.16 L19.02 20.22 L18.77 20.25 L18.50 20.25 L18.22 20.22 L17.92 20.15 L17.59 20.02 L17.17 19.73 L16.76 19.43 L16.46 19.27 L16.19 19.15 L15.95 19.06 L15.74 18.99 L15.54 18.94 L15.35 18.92 L15.19 18.91 L15.03 18.93 L14.89 18.98 L14.76 19.04 L14.63 19.14 L14.52 19.26 L14.41 19.41 L14.30 19.59 L14.20 19.79 L14.09 20.02 L13.99 20.30 L13.89 20.62 L13.81 21.12 L13.72 21.63 L13.58 21.95 L13.41 22.21 L13.23 22.43 L13.05 22.62 L12.85 22.78 L12.64 22.90 L12.43 22.98 L12.22 23.03 L12.00 23.05 L11.78 23.03 L11.57 22.98 L11.36 22.90 L11.15 22.78 L10.95 22.62 L10.77 22.43 L10.59 22.21 L10.42 21.95 L10.28 21.63 L10.19 21.12 L10.11 20.62 L10.01 20.30 L9.91 20.02 L9.80 19.79 L9.70 19.59 L9.59 19.41 L9.48 19.26 L9.37 19.14 L9.24 19.04 L9.11 18.98 L8.97 18.93 L8.81 18.91 L8.65 18.92 L8.46 18.94 L8.26 18.99 L8.05 19.06 L7.81 19.15 L7.54 19.27 L7.24 19.43 L6.83 19.73 L6.41 20.02 L6.08 20.15 L5.78 20.22 L5.50 20.25 L5.23 20.25 L4.98 20.22 L4.75 20.16 L4.54 20.07 L4.35 19.95 L4.19 19.81 L4.05 19.65 L3.93 19.46 L3.84 19.25 L3.78 19.02 L3.75 18.77 L3.75 18.50 L3.78 18.22 L3.85 17.92 L3.98 17.59 L4.27 17.17 L4.57 16.76 L4.73 16.46 L4.85 16.19 L4.94 15.95 L5.01 15.74 L5.06 15.54 L5.08 15.35 L5.09 15.19 L5.07 15.03 L5.02 14.89 L4.96 14.76 L4.86 14.63 L4.74 14.52 L4.59 14.41 L4.41 14.30 L4.21 14.20 L3.98 14.09 L3.70 13.99 L3.38 13.89 L2.88 13.81 L2.37 13.72 L2.05 13.58 L1.79 13.41 L1.57 13.23 L1.38 13.05 L1.22 12.85 L1.10 12.64 L1.02 12.43 L0.97 12.22 L0.95 12.00 L0.97 11.78 L1.02 11.57 L1.10 11.36 L1.22 11.15 L1.38 10.95 L1.57 10.77 L1.79 10.59 L2.05 10.42 L2.37 10.28 L2.88 10.19 L3.38 10.11 L3.70 10.01 L3.98 9.91 L4.21 9.80 L4.41 9.70 L4.59 9.59 L4.74 9.48 L4.86 9.37 L4.96 9.24 L5.02 9.11 L5.07 8.97 L5.09 8.81 L5.08 8.65 L5.06 8.46 L5.01 8.26 L4.94 8.05 L4.85 7.81 L4.73 7.54 L4.57 7.24 L4.27 6.83 L3.98 6.41 L3.85 6.08 L3.78 5.78 L3.75 5.50 L3.75 5.23 L3.78 4.98 L3.84 4.75 L3.93 4.54 L4.05 4.35 L4.19 4.19 L4.35 4.05 L4.54 3.93 L4.75 3.84 L4.98 3.78 L5.23 3.75 L5.50 3.75 L5.78 3.78 L6.08 3.85 L6.41 3.98 L6.83 4.27 L7.24 4.57 L7.54 4.73 L7.81 4.85 L8.05 4.94 L8.26 5.01 L8.46 5.06 L8.65 5.08 L8.81 5.09 L8.97 5.07 L9.11 5.02 L9.24 4.96 L9.37 4.86 L9.48 4.74 L9.59 4.59 L9.70 4.41 L9.80 4.21 L9.91 3.98 L10.01 3.70 L10.11 3.38 L10.19 2.88 L10.28 2.37 L10.42 2.05 L10.59 1.79 L10.77 1.57 L10.95 1.38 L11.15 1.22 L11.36 1.10 L11.57 1.02 L11.78 0.97 Z" fill="none" stroke="#2e3046" stroke-width="1.3" stroke-linejoin="round"/><circle cx="12" cy="12" r="3.1" fill="none" stroke="#2e3046" stroke-width="1.3"/></svg>
<div class="r" style="left:146px;top:506px;width:1629px;height:423px;overflow:hidden;"><div class="r" style="left:0px;top:0px;width:1650px;height:1px;background:#dcdcdf;"></div><div class="r" style="left:536px;top:42px;width:1112px;height:1px;background:#dcdcdf;"></div><div class="r" style="left:0px;top:84px;width:1650px;height:1px;background:#dcdcdf;"></div><div class="r" style="left:0px;top:127px;width:1650px;height:1px;background:#dcdcdf;"></div><div class="r" style="left:0px;top:169px;width:1650px;height:1px;background:#dcdcdf;"></div><div class="r" style="left:0px;top:211px;width:1650px;height:1px;background:#dcdcdf;"></div><div class="r" style="left:0px;top:253px;width:1650px;height:1px;background:#dcdcdf;"></div><div class="r" style="left:0px;top:317px;width:1650px;height:1px;background:#dcdcdf;"></div><div class="r" style="left:0px;top:359px;width:1650px;height:1px;background:#dcdcdf;"></div><div class="r" style="left:0px;top:401px;width:1650px;height:1px;background:#dcdcdf;"></div><div class="r" style="left:0px;top:443px;width:1650px;height:1px;background:#dcdcdf;"></div><div class="r" style="left:0px;top:0px;width:1px;height:450px;background:#dcdcdf;"></div><div class="r" style="left:224px;top:0px;width:1px;height:450px;background:#dcdcdf;"></div><div class="r" style="left:380px;top:0px;width:1px;height:450px;background:#dcdcdf;"></div><div class="r" style="left:536px;top:0px;width:1px;height:450px;background:#dcdcdf;"></div><div class="r" style="left:753px;top:0px;width:1px;height:450px;background:#dcdcdf;"></div><div class="r" style="left:970px;top:0px;width:1px;height:450px;background:#dcdcdf;"></div><div class="r" style="left:1186px;top:0px;width:1px;height:450px;background:#dcdcdf;"></div><div class="r" style="left:1417px;top:0px;width:1px;height:450px;background:#dcdcdf;"></div><div class="r" style="left:644px;top:42px;width:1px;height:410px;background:#dcdcdf;"></div><div class="r" style="left:861px;top:42px;width:1px;height:410px;background:#dcdcdf;"></div><div class="r" style="left:1078px;top:42px;width:1px;height:410px;background:#dcdcdf;"></div><div class="r" style="left:1302px;top:42px;width:1px;height:410px;background:#dcdcdf;"></div><div class="r" style="left:1532px;top:42px;width:1px;height:410px;background:#dcdcdf;"></div><div class="t" style="top:10.81px;font-size:18px;line-height:22.5px;color:#111;font-weight:bold;left:-187.3px;width:600px;text-align:center;letter-spacing:-0.022px;"><span style="margin-right:0.022px">Patient Name</span></div><div class="t" style="top:10.81px;font-size:18px;line-height:22.5px;color:#111;font-weight:bold;left:2.1999999999999886px;width:600px;text-align:center;letter-spacing:-0.195px;"><span style="margin-right:0.195px">Patient Record</span></div><div class="t" style="top:31.81px;font-size:18px;line-height:22.5px;color:#111;font-weight:bold;left:2.8999999999999773px;width:600px;text-align:center;">ID</div><div class="t" style="top:10.81px;font-size:18px;line-height:22.5px;color:#111;font-weight:bold;left:160.39999999999998px;width:600px;text-align:center;letter-spacing:-0.242px;"><span style="margin-right:0.242px">Invoice Amount</span></div><div class="t" style="top:10.81px;font-size:18px;line-height:22.5px;color:#111;font-weight:bold;left:344.5px;width:600px;text-align:center;letter-spacing:-0.320px;"><span style="margin-right:0.320px">Amount Paid</span></div><div class="t" style="top:10.81px;font-size:18px;line-height:22.5px;color:#111;font-weight:bold;left:561.6px;width:600px;text-align:center;letter-spacing:-0.139px;"><span style="margin-right:0.139px">Adjustment Amount</span></div><div class="t" style="top:10.81px;font-size:18px;line-height:22.5px;color:#111;font-weight:bold;left:778.4000000000001px;width:600px;text-align:center;letter-spacing:0.322px;"><span style="margin-right:-0.322px">Write-off Amount</span></div><div class="t" style="top:10.81px;font-size:18px;line-height:22.5px;color:#111;font-weight:bold;left:1002.5px;width:600px;text-align:center;letter-spacing:-0.233px;"><span style="margin-right:0.233px">Invoice Due</span></div><div class="t" style="top:10.81px;font-size:18px;line-height:22.5px;color:#111;font-weight:bold;left:1232.3px;width:600px;text-align:center;letter-spacing:-0.457px;"><span style="margin-right:0.457px">Unused Payment</span></div><div class="t" style="top:52.81px;font-size:18px;line-height:22.5px;color:#111;font-weight:bold;left:233.29999999999995px;width:400px;text-align:right;letter-spacing:0.181px;"><span style="margin-right:-0.181px">Patient</span></div><div class="t" style="top:52.81px;font-size:18px;line-height:22.5px;color:#111;font-weight:bold;left:342.29999999999995px;width:400px;text-align:right;letter-spacing:-0.406px;"><span style="margin-right:0.406px">Insurance</span></div><div class="t" style="top:52.81px;font-size:18px;line-height:22.5px;color:#111;font-weight:bold;left:450.29999999999995px;width:400px;text-align:right;letter-spacing:0.181px;"><span style="margin-right:-0.181px">Patient</span></div><div class="t" style="top:52.81px;font-size:18px;line-height:22.5px;color:#111;font-weight:bold;left:559.3px;width:400px;text-align:right;letter-spacing:-0.406px;"><span style="margin-right:0.406px">Insurance</span></div><div class="t" style="top:52.81px;font-size:18px;line-height:22.5px;color:#111;font-weight:bold;left:667.3px;width:400px;text-align:right;letter-spacing:0.181px;"><span style="margin-right:-0.181px">Patient</span></div><div class="t" style="top:52.81px;font-size:18px;line-height:22.5px;color:#111;font-weight:bold;left:775.8px;width:400px;text-align:right;letter-spacing:-0.406px;"><span style="margin-right:0.406px">Insurance</span></div><div class="t" style="top:52.81px;font-size:18px;line-height:22.5px;color:#111;font-weight:bold;left:891.3px;width:400px;text-align:right;letter-spacing:0.181px;"><span style="margin-right:-0.181px">Patient</span></div><div class="t" style="top:52.81px;font-size:18px;line-height:22.5px;color:#111;font-weight:bold;left:1006.3px;width:400px;text-align:right;letter-spacing:-0.406px;"><span style="margin-right:0.406px">Insurance</span></div><div class="t" style="top:52.81px;font-size:18px;line-height:22.5px;color:#111;font-weight:bold;left:1121.3px;width:400px;text-align:right;letter-spacing:0.181px;"><span style="margin-right:-0.181px">Patient</span></div><div class="t" style="top:52.81px;font-size:18px;line-height:22.5px;color:#111;font-weight:bold;left:1236.8px;width:400px;text-align:right;letter-spacing:-0.406px;"><span style="margin-right:0.406px">Insurance</span></div><div class="t" style="top:94.81px;font-size:18px;line-height:22.5px;color:#0b86d6;left:11px;letter-spacing:0.302px;"><span style="margin-right:-0.302px">Anton,John</span></div><div class="t" style="top:94.81px;font-size:18px;line-height:22.5px;color:#111;left:-30.700000000000045px;width:400px;text-align:right;letter-spacing:0.2px"><span style="margin-right:-0.2px">ChARM1329</span></div><div class="t" style="top:94.81px;font-size:18px;line-height:22.5px;color:#111;left:125.29999999999995px;width:400px;text-align:right;letter-spacing:0.4px"><span style="margin-right:-0.4px">575.00</span></div><div class="t" style="top:94.81px;font-size:18px;line-height:22.5px;color:#111;left:233.29999999999995px;width:400px;text-align:right;letter-spacing:0.4px"><span style="margin-right:-0.4px">1.00</span></div><div class="t" style="top:94.81px;font-size:18px;line-height:22.5px;color:#111;left:342.29999999999995px;width:400px;text-align:right;letter-spacing:0.4px"><span style="margin-right:-0.4px">0.00</span></div><div class="t" style="top:94.81px;font-size:18px;line-height:22.5px;color:#111;left:450.29999999999995px;width:400px;text-align:right;letter-spacing:0.4px"><span style="margin-right:-0.4px">0.00</span></div><div class="t" style="top:94.81px;font-size:18px;line-height:22.5px;color:#111;left:559.3px;width:400px;text-align:right;letter-spacing:0.4px"><span style="margin-right:-0.4px">0.00</span></div><div class="t" style="top:94.81px;font-size:18px;line-height:22.5px;color:#111;left:667.3px;width:400px;text-align:right;letter-spacing:0.4px"><span style="margin-right:-0.4px">0.00</span></div><div class="t" style="top:94.81px;font-size:18px;line-height:22.5px;color:#111;left:775.8px;width:400px;text-align:right;letter-spacing:0.4px"><span style="margin-right:-0.4px">0.00</span></div><div class="t" style="top:94.81px;font-size:18px;line-height:22.5px;color:#111;left:891.3px;width:400px;text-align:right;letter-spacing:0.4px"><span style="margin-right:-0.4px">375.00</span></div><div class="t" style="top:94.81px;font-size:18px;line-height:22.5px;color:#111;left:1006.3px;width:400px;text-align:right;letter-spacing:0.4px"><span style="margin-right:-0.4px">199.00</span></div><div class="t" style="top:94.81px;font-size:18px;line-height:22.5px;color:#111;left:1121.3px;width:400px;text-align:right;letter-spacing:0.4px"><span style="margin-right:-0.4px">1.00</span></div><div class="t" style="top:94.81px;font-size:18px;line-height:22.5px;color:#111;left:1236.8px;width:400px;text-align:right;letter-spacing:0.4px"><span style="margin-right:-0.4px">0.00</span></div><div class="t" style="top:137.81px;font-size:18px;line-height:22.5px;color:#0b86d6;left:11px;letter-spacing:0.260px;"><span style="margin-right:-0.260px">Cavalli,Roberto</span></div><div class="t" style="top:137.81px;font-size:18px;line-height:22.5px;color:#111;left:-30.700000000000045px;width:400px;text-align:right;letter-spacing:0.2px"><span style="margin-right:-0.2px">$IB$15673</span></div><div class="t" style="top:137.81px;font-size:18px;line-height:22.5px;color:#111;left:125.29999999999995px;width:400px;text-align:right;letter-spacing:0.4px"><span style="margin-right:-0.4px">100.00</span></div><div class="t" style="top:137.81px;font-size:18px;line-height:22.5px;color:#111;left:233.29999999999995px;width:400px;text-align:right;letter-spacing:0.4px"><span style="margin-right:-0.4px">0.00</span></div><div class="t" style="top:137.81px;font-size:18px;line-height:22.5px;color:#111;left:342.29999999999995px;width:400px;text-align:right;letter-spacing:0.4px"><span style="margin-right:-0.4px">0.00</span></div><div class="t" style="top:137.81px;font-size:18px;line-height:22.5px;color:#111;left:450.29999999999995px;width:400px;text-align:right;letter-spacing:0.4px"><span style="margin-right:-0.4px">0.00</span></div><div class="t" style="top:137.81px;font-size:18px;line-height:22.5px;color:#111;left:559.3px;width:400px;text-align:right;letter-spacing:0.4px"><span style="margin-right:-0.4px">0.00</span></div><div class="t" style="top:137.81px;font-size:18px;line-height:22.5px;color:#111;left:667.3px;width:400px;text-align:right;letter-spacing:0.4px"><span style="margin-right:-0.4px">0.00</span></div><div class="t" style="top:137.81px;font-size:18px;line-height:22.5px;color:#111;left:775.8px;width:400px;text-align:right;letter-spacing:0.4px"><span style="margin-right:-0.4px">0.00</span></div><div class="t" style="top:137.81px;font-size:18px;line-height:22.5px;color:#111;left:891.3px;width:400px;text-align:right;letter-spacing:0.4px"><span style="margin-right:-0.4px">100.00</span></div><div class="t" style="top:137.81px;font-size:18px;line-height:22.5px;color:#111;left:1006.3px;width:400px;text-align:right;letter-spacing:0.4px"><span style="margin-right:-0.4px">0.00</span></div><div class="t" style="top:137.81px;font-size:18px;line-height:22.5px;color:#111;left:1121.3px;width:400px;text-align:right;letter-spacing:0.4px"><span style="margin-right:-0.4px">0.00</span></div><div class="t" style="top:137.81px;font-size:18px;line-height:22.5px;color:#111;left:1236.8px;width:400px;text-align:right;letter-spacing:0.4px"><span style="margin-right:-0.4px">0.00</span></div><div class="t" style="top:179.81px;font-size:18px;line-height:22.5px;color:#0b86d6;left:11px;letter-spacing:-0.369px;"><span style="margin-right:0.369px">CROSS,DAVID</span></div><div class="t" style="top:179.81px;font-size:18px;line-height:22.5px;color:#111;left:-30.700000000000045px;width:400px;text-align:right;letter-spacing:0.2px"><span style="margin-right:-0.2px">Cha10099</span></div><div class="t" style="top:179.81px;font-size:18px;line-height:22.5px;color:#111;left:125.29999999999995px;width:400px;text-align:right;letter-spacing:0.4px"><span style="margin-right:-0.4px">400.00</span></div><div class="t" style="top:179.81px;font-size:18px;line-height:22.5px;color:#111;left:233.29999999999995px;width:400px;text-align:right;letter-spacing:0.4px"><span style="margin-right:-0.4px">0.00</span></div><div class="t" style="top:179.81px;font-size:18px;line-height:22.5px;color:#111;left:342.29999999999995px;width:400px;text-align:right;letter-spacing:0.4px"><span style="margin-right:-0.4px">0.00</span></div><div class="t" style="top:179.81px;font-size:18px;line-height:22.5px;color:#111;left:450.29999999999995px;width:400px;text-align:right;letter-spacing:0.4px"><span style="margin-right:-0.4px">0.00</span></div><div class="t" style="top:179.81px;font-size:18px;line-height:22.5px;color:#111;left:559.3px;width:400px;text-align:right;letter-spacing:0.4px"><span style="margin-right:-0.4px">0.00</span></div><div class="t" style="top:179.81px;font-size:18px;line-height:22.5px;color:#111;left:667.3px;width:400px;text-align:right;letter-spacing:0.4px"><span style="margin-right:-0.4px">0.00</span></div><div class="t" style="top:179.81px;font-size:18px;line-height:22.5px;color:#111;left:775.8px;width:400px;text-align:right;letter-spacing:0.4px"><span style="margin-right:-0.4px">0.00</span></div><div class="t" style="top:179.81px;font-size:18px;line-height:22.5px;color:#111;left:891.3px;width:400px;text-align:right;letter-spacing:0.4px"><span style="margin-right:-0.4px">300.00</span></div><div class="t" style="top:179.81px;font-size:18px;line-height:22.5px;color:#111;left:1006.3px;width:400px;text-align:right;letter-spacing:0.4px"><span style="margin-right:-0.4px">100.00</span></div><div class="t" style="top:179.81px;font-size:18px;line-height:22.5px;color:#111;left:1121.3px;width:400px;text-align:right;letter-spacing:0.4px"><span style="margin-right:-0.4px">0.00</span></div><div class="t" style="top:179.81px;font-size:18px;line-height:22.5px;color:#111;left:1236.8px;width:400px;text-align:right;letter-spacing:0.4px"><span style="margin-right:-0.4px">0.00</span></div><div class="t" style="top:221.81px;font-size:18px;line-height:22.5px;color:#0b86d6;left:11px;letter-spacing:0.020px;"><span style="margin-right:-0.020px">Doe,John</span></div><div class="t" style="top:221.81px;font-size:18px;line-height:22.5px;color:#111;left:-30.700000000000045px;width:400px;text-align:right;letter-spacing:0.2px"><span style="margin-right:-0.2px">CHA002</span></div><div class="t" style="top:221.81px;font-size:18px;line-height:22.5px;color:#111;left:125.29999999999995px;width:400px;text-align:right;letter-spacing:0.4px"><span style="margin-right:-0.4px">0.00</span></div><div class="t" style="top:221.81px;font-size:18px;line-height:22.5px;color:#111;left:233.29999999999995px;width:400px;text-align:right;letter-spacing:0.4px"><span style="margin-right:-0.4px">0.00</span></div><div class="t" style="top:221.81px;font-size:18px;line-height:22.5px;color:#111;left:342.29999999999995px;width:400px;text-align:right;letter-spacing:0.4px"><span style="margin-right:-0.4px">0.00</span></div><div class="t" style="top:221.81px;font-size:18px;line-height:22.5px;color:#111;left:450.29999999999995px;width:400px;text-align:right;letter-spacing:0.4px"><span style="margin-right:-0.4px">0.00</span></div><div class="t" style="top:221.81px;font-size:18px;line-height:22.5px;color:#111;left:559.3px;width:400px;text-align:right;letter-spacing:0.4px"><span style="margin-right:-0.4px">0.00</span></div><div class="t" style="top:221.81px;font-size:18px;line-height:22.5px;color:#111;left:667.3px;width:400px;text-align:right;letter-spacing:0.4px"><span style="margin-right:-0.4px">0.00</span></div><div class="t" style="top:221.81px;font-size:18px;line-height:22.5px;color:#111;left:775.8px;width:400px;text-align:right;letter-spacing:0.4px"><span style="margin-right:-0.4px">0.00</span></div><div class="t" style="top:221.81px;font-size:18px;line-height:22.5px;color:#111;left:891.3px;width:400px;text-align:right;letter-spacing:0.4px"><span style="margin-right:-0.4px">0.00</span></div><div class="t" style="top:221.81px;font-size:18px;line-height:22.5px;color:#111;left:1006.3px;width:400px;text-align:right;letter-spacing:0.4px"><span style="margin-right:-0.4px">0.00</span></div><div class="t" style="top:221.81px;font-size:18px;line-height:22.5px;color:#111;left:1121.3px;width:400px;text-align:right;letter-spacing:0.4px"><span style="margin-right:-0.4px">15,361.52</span></div><div class="t" style="top:221.81px;font-size:18px;line-height:22.5px;color:#111;left:1236.8px;width:400px;text-align:right;letter-spacing:0.4px"><span style="margin-right:-0.4px">0.00</span></div><div class="t" style="top:263.81px;font-size:18px;line-height:22.5px;color:#0b86d6;left:11px;letter-spacing:0.210px;"><span style="margin-right:-0.210px">Dominguez Morel</span></div><div class="t" style="top:285.81px;font-size:18px;line-height:22.5px;color:#0b86d6;left:11px;letter-spacing:0.252px;"><span style="margin-right:-0.252px">d&#x27;Arleux,Thibaut</span></div><div class="t" style="top:274.81px;font-size:18px;line-height:22.5px;color:#111;left:-30.700000000000045px;width:400px;text-align:right;letter-spacing:0.2px"><span style="margin-right:-0.2px">Cha10117</span></div><div class="t" style="top:274.81px;font-size:18px;line-height:22.5px;color:#111;left:125.29999999999995px;width:400px;text-align:right;letter-spacing:0.4px"><span style="margin-right:-0.4px">299.00</span></div><div class="t" style="top:274.81px;font-size:18px;line-height:22.5px;color:#111;left:233.29999999999995px;width:400px;text-align:right;letter-spacing:0.4px"><span style="margin-right:-0.4px">0.00</span></div><div class="t" style="top:274.81px;font-size:18px;line-height:22.5px;color:#111;left:342.29999999999995px;width:400px;text-align:right;letter-spacing:0.4px"><span style="margin-right:-0.4px">0.00</span></div><div class="t" style="top:274.81px;font-size:18px;line-height:22.5px;color:#111;left:450.29999999999995px;width:400px;text-align:right;letter-spacing:0.4px"><span style="margin-right:-0.4px">0.00</span></div><div class="t" style="top:274.81px;font-size:18px;line-height:22.5px;color:#111;left:559.3px;width:400px;text-align:right;letter-spacing:0.4px"><span style="margin-right:-0.4px">0.00</span></div><div class="t" style="top:274.81px;font-size:18px;line-height:22.5px;color:#111;left:667.3px;width:400px;text-align:right;letter-spacing:0.4px"><span style="margin-right:-0.4px">0.00</span></div><div class="t" style="top:274.81px;font-size:18px;line-height:22.5px;color:#111;left:775.8px;width:400px;text-align:right;letter-spacing:0.4px"><span style="margin-right:-0.4px">0.00</span></div><div class="t" style="top:274.81px;font-size:18px;line-height:22.5px;color:#111;left:891.3px;width:400px;text-align:right;letter-spacing:0.4px"><span style="margin-right:-0.4px">99.00</span></div><div class="t" style="top:274.81px;font-size:18px;line-height:22.5px;color:#111;left:1006.3px;width:400px;text-align:right;letter-spacing:0.4px"><span style="margin-right:-0.4px">200.00</span></div><div class="t" style="top:274.81px;font-size:18px;line-height:22.5px;color:#111;left:1121.3px;width:400px;text-align:right;letter-spacing:0.4px"><span style="margin-right:-0.4px">0.00</span></div><div class="t" style="top:274.81px;font-size:18px;line-height:22.5px;color:#111;left:1236.8px;width:400px;text-align:right;letter-spacing:0.4px"><span style="margin-right:-0.4px">0.00</span></div><div class="t" style="top:327.81px;font-size:18px;line-height:22.5px;color:#0b86d6;left:11px;letter-spacing:-0.408px;"><span style="margin-right:0.408px">Sew, Paul</span></div><div class="t" style="top:327.81px;font-size:18px;line-height:22.5px;color:#111;left:-30.700000000000045px;width:400px;text-align:right;letter-spacing:0.2px"><span style="margin-right:-0.2px">EHR15822</span></div><div class="t" style="top:327.81px;font-size:18px;line-height:22.5px;color:#111;left:125.29999999999995px;width:400px;text-align:right;letter-spacing:0.4px"><span style="margin-right:-0.4px">21.00</span></div><div class="t" style="top:327.81px;font-size:18px;line-height:22.5px;color:#111;left:233.29999999999995px;width:400px;text-align:right;letter-spacing:0.4px"><span style="margin-right:-0.4px">0.00</span></div><div class="t" style="top:327.81px;font-size:18px;line-height:22.5px;color:#111;left:342.29999999999995px;width:400px;text-align:right;letter-spacing:0.4px"><span style="margin-right:-0.4px">0.00</span></div><div class="t" style="top:327.81px;font-size:18px;line-height:22.5px;color:#111;left:450.29999999999995px;width:400px;text-align:right;letter-spacing:0.4px"><span style="margin-right:-0.4px">0.00</span></div><div class="t" style="top:327.81px;font-size:18px;line-height:22.5px;color:#111;left:559.3px;width:400px;text-align:right;letter-spacing:0.4px"><span style="margin-right:-0.4px">0.00</span></div><div class="t" style="top:327.81px;font-size:18px;line-height:22.5px;color:#111;left:667.3px;width:400px;text-align:right;letter-spacing:0.4px"><span style="margin-right:-0.4px">0.00</span></div><div class="t" style="top:327.81px;font-size:18px;line-height:22.5px;color:#111;left:775.8px;width:400px;text-align:right;letter-spacing:0.4px"><span style="margin-right:-0.4px">0.00</span></div><div class="t" style="top:327.81px;font-size:18px;line-height:22.5px;color:#111;left:891.3px;width:400px;text-align:right;letter-spacing:0.4px"><span style="margin-right:-0.4px">21.00</span></div><div class="t" style="top:327.81px;font-size:18px;line-height:22.5px;color:#111;left:1006.3px;width:400px;text-align:right;letter-spacing:0.4px"><span style="margin-right:-0.4px">0.00</span></div><div class="t" style="top:327.81px;font-size:18px;line-height:22.5px;color:#111;left:1121.3px;width:400px;text-align:right;letter-spacing:0.4px"><span style="margin-right:-0.4px">0.00</span></div><div class="t" style="top:327.81px;font-size:18px;line-height:22.5px;color:#111;left:1236.8px;width:400px;text-align:right;letter-spacing:0.4px"><span style="margin-right:-0.4px">0.00</span></div><div class="t" style="top:369.81px;font-size:18px;line-height:22.5px;color:#0b86d6;left:11px;letter-spacing:0.030px;"><span style="margin-right:-0.030px">Johnson,Scarlet</span></div><div class="t" style="top:369.81px;font-size:18px;line-height:22.5px;color:#111;left:-30.700000000000045px;width:400px;text-align:right;letter-spacing:0.2px"><span style="margin-right:-0.2px">Cha10082</span></div><div class="t" style="top:369.81px;font-size:18px;line-height:22.5px;color:#111;left:125.29999999999995px;width:400px;text-align:right;letter-spacing:0.4px"><span style="margin-right:-0.4px">200.00</span></div><div class="t" style="top:369.81px;font-size:18px;line-height:22.5px;color:#111;left:233.29999999999995px;width:400px;text-align:right;letter-spacing:0.4px"><span style="margin-right:-0.4px">0.00</span></div><div class="t" style="top:369.81px;font-size:18px;line-height:22.5px;color:#111;left:342.29999999999995px;width:400px;text-align:right;letter-spacing:0.4px"><span style="margin-right:-0.4px">0.00</span></div><div class="t" style="top:369.81px;font-size:18px;line-height:22.5px;color:#111;left:450.29999999999995px;width:400px;text-align:right;letter-spacing:0.4px"><span style="margin-right:-0.4px">0.00</span></div><div class="t" style="top:369.81px;font-size:18px;line-height:22.5px;color:#111;left:559.3px;width:400px;text-align:right;letter-spacing:0.4px"><span style="margin-right:-0.4px">0.00</span></div><div class="t" style="top:369.81px;font-size:18px;line-height:22.5px;color:#111;left:667.3px;width:400px;text-align:right;letter-spacing:0.4px"><span style="margin-right:-0.4px">0.00</span></div><div class="t" style="top:369.81px;font-size:18px;line-height:22.5px;color:#111;left:775.8px;width:400px;text-align:right;letter-spacing:0.4px"><span style="margin-right:-0.4px">0.00</span></div><div class="t" style="top:369.81px;font-size:18px;line-height:22.5px;color:#111;left:891.3px;width:400px;text-align:right;letter-spacing:0.4px"><span style="margin-right:-0.4px">200.00</span></div><div class="t" style="top:369.81px;font-size:18px;line-height:22.5px;color:#111;left:1006.3px;width:400px;text-align:right;letter-spacing:0.4px"><span style="margin-right:-0.4px">0.00</span></div><div class="t" style="top:369.81px;font-size:18px;line-height:22.5px;color:#111;left:1121.3px;width:400px;text-align:right;letter-spacing:0.4px"><span style="margin-right:-0.4px">0.00</span></div><div class="t" style="top:369.81px;font-size:18px;line-height:22.5px;color:#111;left:1236.8px;width:400px;text-align:right;letter-spacing:0.4px"><span style="margin-right:-0.4px">0.00</span></div><div class="t" style="top:411.81px;font-size:18px;line-height:22.5px;color:#0b86d6;left:11px;letter-spacing:0.227px;"><span style="margin-right:-0.227px">Jr. Downley,Robert</span></div><div class="t" style="top:411.81px;font-size:18px;line-height:22.5px;color:#111;left:-30.700000000000045px;width:400px;text-align:right;letter-spacing:0.2px"><span style="margin-right:-0.2px">AMD0001</span></div><div class="t" style="top:411.81px;font-size:18px;line-height:22.5px;color:#111;left:125.29999999999995px;width:400px;text-align:right;letter-spacing:0.4px"><span style="margin-right:-0.4px">779.00</span></div><div class="t" style="top:411.81px;font-size:18px;line-height:22.5px;color:#111;left:233.29999999999995px;width:400px;text-align:right;letter-spacing:0.4px"><span style="margin-right:-0.4px">0.00</span></div><div class="t" style="top:411.81px;font-size:18px;line-height:22.5px;color:#111;left:342.29999999999995px;width:400px;text-align:right;letter-spacing:0.4px"><span style="margin-right:-0.4px">27.00</span></div><div class="t" style="top:411.81px;font-size:18px;line-height:22.5px;color:#111;left:450.29999999999995px;width:400px;text-align:right;letter-spacing:0.4px"><span style="margin-right:-0.4px">0.00</span></div><div class="t" style="top:411.81px;font-size:18px;line-height:22.5px;color:#111;left:559.3px;width:400px;text-align:right;letter-spacing:0.4px"><span style="margin-right:-0.4px">8.00</span></div><div class="t" style="top:411.81px;font-size:18px;line-height:22.5px;color:#111;left:667.3px;width:400px;text-align:right;letter-spacing:0.4px"><span style="margin-right:-0.4px">0.00</span></div><div class="t" style="top:411.81px;font-size:18px;line-height:22.5px;color:#111;left:775.8px;width:400px;text-align:right;letter-spacing:0.4px"><span style="margin-right:-0.4px">13.00</span></div><div class="t" style="top:411.81px;font-size:18px;line-height:22.5px;color:#111;left:891.3px;width:400px;text-align:right;letter-spacing:0.4px"><span style="margin-right:-0.4px">16.00</span></div><div class="t" style="top:411.81px;font-size:18px;line-height:22.5px;color:#111;left:1006.3px;width:400px;text-align:right;letter-spacing:0.4px"><span style="margin-right:-0.4px">714.00</span></div><div class="t" style="top:411.81px;font-size:18px;line-height:22.5px;color:#111;left:1121.3px;width:400px;text-align:right;letter-spacing:0.4px"><span style="margin-right:-0.4px">0.00</span></div><div class="t" style="top:411.81px;font-size:18px;line-height:22.5px;color:#111;left:1236.8px;width:400px;text-align:right;letter-spacing:0.4px"><span style="margin-right:-0.4px">0.00</span></div></div>
<div class="r" style="left:1331px;top:502px;width:239.5px;height:438px;border:3px solid #ff0549;box-sizing:border-box;"></div>
<div class="r" style="left:1331px;top:940px;width:239.5px;height:2px;background:linear-gradient(#3d6fb0,#2a86e0);"></div>
</body></html>
